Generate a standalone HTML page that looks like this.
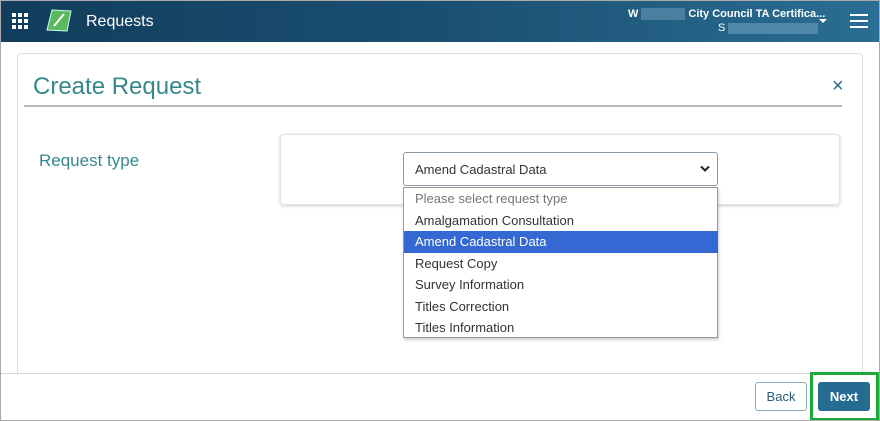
<!DOCTYPE html>
<html><head><style>
*{box-sizing:border-box;margin:0;padding:0}
body{width:880px;height:421px;overflow:hidden;position:relative;background:#fff;font-family:"Liberation Sans","DejaVu Sans",sans-serif}
.hdr{position:absolute;left:0;top:0;width:880px;height:42px;background:linear-gradient(90deg,#123d5c 0%,#1a4f72 50%,#2b6e93 100%)}
.abs{position:absolute}
.card{position:absolute;left:17px;top:53px;width:846px;height:330px;border:1px solid #ddd;border-radius:4px;background:#fff}
.opt{position:absolute;left:0;width:314px;height:21.5px;font-size:13px;color:#333;padding-left:11px;line-height:21px}
</style></head><body>
<div class="hdr">
 <div class="abs" style="left:12px;top:13px;width:17px;height:17px">
  <svg width="17" height="17"><g fill="#fff"><rect x="0" y="0" width="4" height="4"/><rect x="6" y="0" width="4" height="4"/><rect x="12" y="0" width="4" height="4"/><rect x="0" y="6" width="4" height="4"/><rect x="6" y="6" width="4" height="4"/><rect x="12" y="6" width="4" height="4"/><rect x="0" y="12" width="4" height="4"/><rect x="6" y="12" width="4" height="4"/><rect x="12" y="12" width="4" height="4"/></g></svg>
 </div>
 <svg class="abs" style="left:46px;top:8px" width="26" height="25"><path d="M6 2 L25 3 L21 23 L1 22 Z" fill="#5cb85c" stroke="#cfe" stroke-width="1"/><path d="M8 18 L18 6" stroke="#fff" stroke-width="2"/></svg>
 <div class="abs" style="left:86px;top:13px;color:#fff;font-size:16px">Requests</div>
 <div class="abs" style="left:628px;top:8px;color:#fff;font-size:11px;font-weight:bold">W<span style="display:inline-block;width:44px;height:12px;background:#4a7f9f;vertical-align:middle;margin:0 3px"></span>City Council TA Certifica...</div>
 <div class="abs" style="left:718px;top:22px;color:#fff;font-size:11px">S<span style="display:inline-block;width:90px;height:11px;background:#4f88a8;vertical-align:middle;margin-left:3px"></span></div>
 <div class="abs" style="left:819px;top:19px;width:0;height:0;border-left:4px solid transparent;border-right:4px solid transparent;border-top:4px solid #fff"></div>
 <div class="abs" style="left:850px;top:14px;width:18px">
  <div style="height:2px;background:#fff;margin-bottom:4px"></div><div style="height:2px;background:#fff;margin-bottom:4px"></div><div style="height:2px;background:#fff"></div>
 </div>
</div>
<div class="card"></div>
<div class="abs" style="left:33px;top:73px;font-size:24px;color:#37888a">Create Request</div>
<div class="abs" style="left:832px;top:75px;font-size:20px;color:#2a6a8a">×</div>
<div class="abs" style="left:24px;top:105px;width:818px;height:2px;background:#bbb"></div>
<div class="abs" style="left:39px;top:151px;font-size:17px;color:#37888a">Request type</div>
<div class="abs" style="left:280px;top:134px;width:560px;height:71px;border:1px solid #e3e3e3;border-radius:4px;box-shadow:0 1px 3px rgba(0,0,0,.2);background:#fff"></div>
<div class="abs" style="left:403px;top:152px;width:315px;height:34px;border:1px solid #8a9aa8;border-radius:3px;background:#fff;font-size:13px;color:#333;padding:9px 0 0 11px">Amend Cadastral Data
 <svg class="abs" style="left:296px;top:12px" width="10" height="8"><path d="M1 1.5 L5 5.5 L9 1.5" stroke="#222" stroke-width="2" fill="none"/></svg>
</div>
<div class="abs" style="left:403px;top:187px;width:315px;height:151px;border:1px solid #999;background:#fff;box-shadow:1px 2px 3px rgba(0,0,0,.2)">
 <div class="opt" style="top:0;color:#777">Please select request type</div>
 <div class="opt" style="top:21.5px">Amalgamation Consultation</div>
 <div class="opt" style="top:43px;background:#3469d4;color:#fff">Amend Cadastral Data</div>
 <div class="opt" style="top:64.5px">Request Copy</div>
 <div class="opt" style="top:86px">Survey Information</div>
 <div class="opt" style="top:107.5px">Titles Correction</div>
 <div class="opt" style="top:129px">Titles Information</div>
</div>
<div class="abs" style="left:0;top:373px;width:880px;height:48px;background:#fff;border-top:1px solid #d8d8d8"></div>
<div class="abs" style="left:755px;top:382px;width:52px;height:29px;border:1px solid #8ab;border-radius:3px;font-size:13px;color:#2a5a7a;text-align:center;line-height:27px;background:#fff">Back</div>
<div class="abs" style="left:810px;top:372px;width:69px;height:49px;border:3px solid #1fa83a"></div>
<div class="abs" style="left:818px;top:382px;width:52px;height:29px;border-radius:3px;background:#266c92;font-size:13px;font-weight:bold;color:#fff;text-align:center;line-height:29px">Next</div>
<div class="abs" style="left:0;top:0;width:880px;height:421px;border:1px solid #aaa;pointer-events:none"></div>
</body></html>
